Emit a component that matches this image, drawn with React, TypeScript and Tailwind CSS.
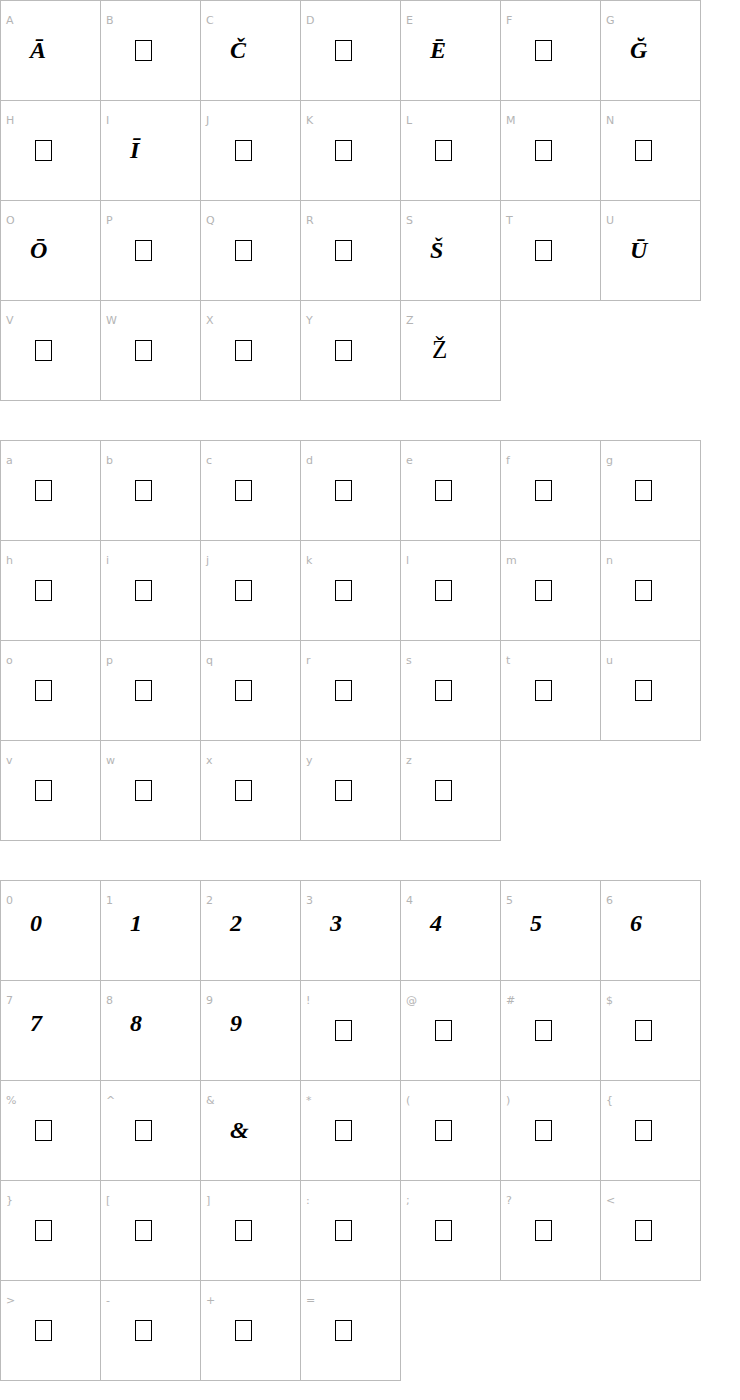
const upper = "ABCDEFGHIJKLMNOPQRSTUVWXYZ".split("");
const lower = "abcdefghijklmnopqrstuvwxyz".split("");
const other = "0123456789!@#$%^&*(){}[]:;?<>-+=".split("");

// glyphs the font actually has; everything else shows the empty box
const upperGlyphs: Record<string, string> = {
  A: "Ā",
  C: "Č",
  E: "Ē",
  G: "Ğ",
  I: "Ī",
  O: "Ō",
  S: "Š",
  U: "Ū",
  Z: "Ž",
};
const otherGlyphs: Record<string, string> = {
  "0": "0",
  "1": "1",
  "2": "2",
  "3": "3",
  "4": "4",
  "5": "5",
  "6": "6",
  "7": "7",
  "8": "8",
  "9": "9",
  "&": "&",
};

function Cell({ label, glyph }: { label: string; glyph?: string }) {
  const upright = glyph === "Ž";
  const digit = glyph !== undefined && /[0-9]/.test(glyph);
  let cls =
    "text-[24px] leading-[24px] text-black italic font-bold font-['Liberation_Serif',serif] translate-y-[1px]";
  if (upright) {
    cls = "text-[25px] leading-[24px] text-black font-['Liberation_Serif',serif] translate-y-[1px] ml-[2px]";
  } else if (digit) {
    cls = "text-[24px] leading-[24px] text-black italic font-bold font-['Liberation_Serif',serif] -translate-y-[6px]";
  }
  return (
    <div className="w-[101px] h-[101px] border border-[#bbbbbb] bg-white pt-[13px] pl-[5px]">
      <div className="text-[11px] leading-[13px] text-[#b4b4b4] font-['DejaVu_Sans',sans-serif]">
        {label}
      </div>
      <div className="mt-[10px] ml-[24px] h-[24px] flex items-end">
        {glyph ? (
          <span className={cls}>{glyph}</span>
        ) : (
          <span className="block w-[17px] h-[21px] border border-black ml-[5px]" />
        )}
      </div>
    </div>
  );
}

function Section({ chars, glyphs }: { chars: string[]; glyphs: Record<string, string> }) {
  return (
    <div className="grid grid-cols-[repeat(7,100px)] auto-rows-[100px] w-[701px]">
      {chars.map((c) => (
        <Cell key={c} label={c} glyph={glyphs[c]} />
      ))}
    </div>
  );
}

export default function App() {
  return (
    <div className="w-[740px] h-[1400px] bg-white flex flex-col gap-[40px]">
      <Section chars={upper} glyphs={upperGlyphs} />
      <Section chars={lower} glyphs={{}} />
      <Section chars={other} glyphs={otherGlyphs} />
    </div>
  );
}
